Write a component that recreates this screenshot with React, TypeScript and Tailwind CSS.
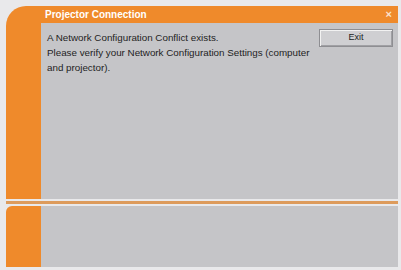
export default function App() {
  return (
    <div className="flex h-[270px] w-[401px] flex-col bg-[#e9e9eb] pl-[6px] pr-[3px] pt-[6px] font-['Liberation_Sans',sans-serif]">
      <div className="flex h-[193px] flex-col rounded-tl-[20px] bg-[#ef8a2b]">
        <div className="flex h-[17px] items-center justify-between pl-[39px] pr-[6px]">
          <span className="text-[10px] font-bold text-white">Projector Connection</span>
          <span className="text-[11px] font-bold leading-none text-[#fbe3cf]">×</span>
        </div>
        <div className="flex flex-1">
          <div className="w-[35px]" />
          <div className="flex flex-1 items-start justify-between bg-[#c5c5c8] pl-[6px] pr-[5px] pt-[7px]">
            <p className="text-[9.8px] leading-[15px] text-[#1e1e1e]">
              A Network Configuration Conflict exists.
              <br />
              Please verify your Network Configuration Settings (computer
              <br />
              and projector).
            </p>
            <button
              type="button"
              className="mt-[-1px] h-[18px] w-[74px] shrink-0 border border-[#8e8e92] bg-[#cfcfd2] text-[9px] text-[#1e1e1e] shadow-[inset_1px_1px_0_#f2f2f2,inset_-1px_-1px_0_#a0a0a4]"
            >
              Exit
            </button>
          </div>
        </div>
      </div>
      <div className="mt-[2px] h-[3px] bg-[#dd9b5c]" />
      <div className="mt-[2px] flex flex-1">
        <div className="w-[35px] rounded-tl-[6px] bg-[#ef8a2b]" />
        <div className="flex-1 bg-[#c5c5c8]" />
      </div>
      <div className="h-[3px]" />
    </div>
  )
}
